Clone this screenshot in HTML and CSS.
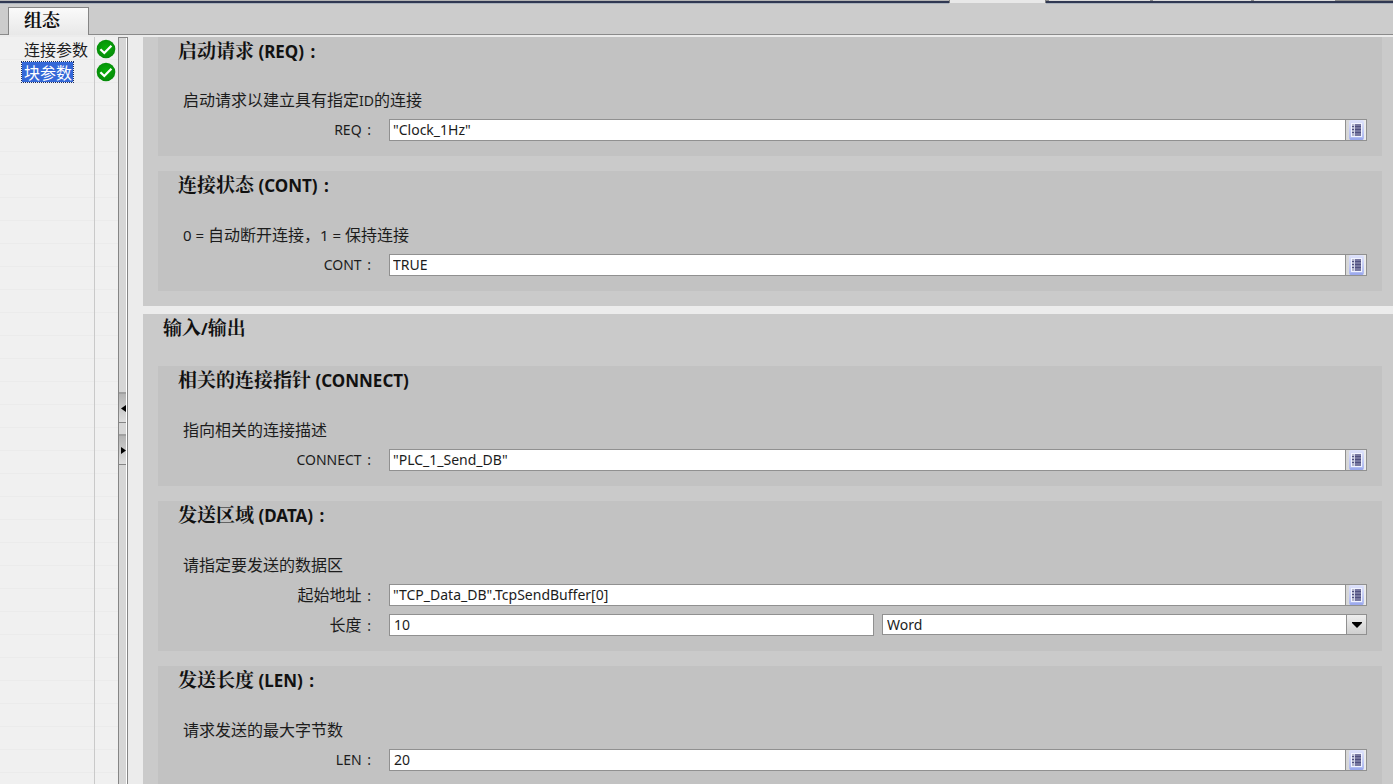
FILE: index.html
```
<!DOCTYPE html>
<html lang="zh-CN">
<head>
<meta charset="utf-8">
<title>组态</title>
<link rel="stylesheet" href="styles.css">
</head>
<body>
<svg class="defs" aria-hidden="true">
  <defs>
    <radialGradient id="green" cx="50%" cy="45%" r="55%"><stop offset="0" stop-color="#08b008"/><stop offset="1" stop-color="#068a0a"/></radialGradient>
    <linearGradient id="halo" x1="0" y1="0" x2="0" y2="1"><stop offset="0" stop-color="#dfe3fb"/><stop offset="1" stop-color="#a9b5f0"/></linearGradient>
    <symbol id="ok" viewBox="0 0 20 20">
      <circle cx="10" cy="10" r="9.3" fill="url(#green)"/>
      <path d="M4.4 10.2 8.3 14 15.4 6.8" fill="none" stroke="#fff" stroke-width="2.3"/>
    </symbol>
    <symbol id="list" viewBox="0 0 20 20">
      <rect x="3" y="0" width="15" height="20" rx="2" fill="url(#halo)"/>
      <rect x="5" y="3" width="11" height="14" fill="#f2f4ff"/>
      <path d="M6 4h2v12H6z" fill="#b4b6cc"/>
      <path d="M8 4h7v12H8z" fill="#77779f"/>
      <path d="M6 6.5h9M6 9.5h9M6 12.5h9" stroke="#505080" stroke-width="1"/>
      <path d="M8.5 4v12" stroke="#d4d6ea" stroke-width="1"/>
      <path d="M4 19h13" stroke="#8d9cea" stroke-width="1"/>
    </symbol>
  </defs>
</svg>
<div class="app">
  <div class="strip">
    <div class="strip-dark"></div>
    <div class="strip-active"></div>
    <div class="strip-rest"><i></i><i></i><i></i></div>
  </div>
  <header class="tabs"><button class="tab" type="button">组态</button></header>
  <div class="work">
    <nav class="side">
      <ul class="nav">
        <li class="nav-row"><a class="nav-link" href="#conn">连接参数</a><svg class="ok"><use href="#ok"/></svg></li>
        <li class="nav-row"><a class="nav-link current" href="#block">块参数</a><svg class="ok"><use href="#ok"/></svg></li>
      </ul>
    </nav>
    <div class="splitter">
      <button class="grip" type="button" aria-label="向左折叠"><svg viewBox="0 0 5 7"><path d="M5 0v7L0 3.5z"/></svg></button>
      <button class="grip" type="button" aria-label="向右折叠"><svg viewBox="0 0 5 7"><path d="M0 0v7l5-3.5z"/></svg></button>
    </div>
    <main class="main" id="block">
      <section class="group">
        <div class="card">
          <h3 class="title"><span class="han">启动请求</span> (REQ) <span class="colon">:</span></h3>
          <p class="desc"><span class="han">启动请求以建立具有指定</span>ID<span class="han">的连接</span></p>
          <div class="row">
            <label class="label" for="req">REQ <span class="colon">:</span></label>
            <div class="field"><input class="text" id="req" value="&quot;Clock_1Hz&quot;"><button class="pick" type="button" aria-label="选择"><svg><use href="#list"/></svg></button></div>
          </div>
        </div>
        <div class="card">
          <h3 class="title"><span class="han">连接状态</span> (CONT) <span class="colon">:</span></h3>
          <p class="desc formula">0 = <span class="han">自动断开连接，</span>1 = <span class="han">保持连接</span></p>
          <div class="row">
            <label class="label" for="cont">CONT <span class="colon">:</span></label>
            <div class="field"><input class="text" id="cont" value="TRUE"><button class="pick" type="button" aria-label="选择"><svg><use href="#list"/></svg></button></div>
          </div>
        </div>
      </section>
      <section class="group">
        <h2 class="group-title"><span class="han">输入</span>/<span class="han">输出</span></h2>
        <div class="card">
          <h3 class="title"><span class="han">相关的连接指针</span> (CONNECT)</h3>
          <p class="desc"><span class="han">指向相关的连接描述</span></p>
          <div class="row">
            <label class="label" for="connect">CONNECT <span class="colon">:</span></label>
            <div class="field"><input class="text" id="connect" value="&quot;PLC_1_Send_DB&quot;"><button class="pick" type="button" aria-label="选择"><svg><use href="#list"/></svg></button></div>
          </div>
        </div>
        <div class="card">
          <h3 class="title"><span class="han">发送区域</span> (DATA) <span class="colon">:</span></h3>
          <p class="desc"><span class="han">请指定要发送的数据区</span></p>
          <div class="row">
            <label class="label" for="start"><span class="han">起始地址</span> <span class="colon">:</span></label>
            <div class="field"><input class="text" id="start" value="&quot;TCP_Data_DB&quot;.TcpSendBuffer[0]"><button class="pick" type="button" aria-label="选择"><svg><use href="#list"/></svg></button></div>
          </div>
          <div class="row">
            <label class="label" for="length"><span class="han">长度</span> <span class="colon">:</span></label>
            <div class="pair">
              <div class="field"><input class="text number" id="length" value="10"></div>
              <div class="field drop"><select class="select" aria-label="数据类型"><option>Word</option></select><span class="arrow"><svg viewBox="0 0 10 6"><path d="M0 0h10v1L5 6 0 1z"/></svg></span></div>
            </div>
          </div>
        </div>
        <div class="card">
          <h3 class="title"><span class="han">发送长度</span> (LEN) <span class="colon">:</span></h3>
          <p class="desc"><span class="han">请求发送的最大字节数</span></p>
          <div class="row">
            <label class="label" for="len">LEN <span class="colon">:</span></label>
            <div class="field"><input class="text number" id="len" value="20"><button class="pick" type="button" aria-label="选择"><svg><use href="#list"/></svg></button></div>
          </div>
        </div>
      </section>
    </main>
  </div>
</div>
</body>
</html>
```
FILE: styles.css
```
* { box-sizing: border-box; }
body {
  margin: 0;
  font: 14px/20px "Noto Sans", "Noto Sans CJK SC", sans-serif;
  color: #1c1c1c;
  background: #e8e8e8;
}
button, input, select { font: inherit; color: inherit; margin: 0; padding: 0; border: 0; border-radius: 0; }
h2, h3, p, ul { margin: 0; padding: 0; }
.defs { position: absolute; width: 0; height: 0; }
.app { height: 100vh; display: flex; flex-direction: column; overflow: hidden; }

.strip { display: flex; height: 4px; flex: none; background: #cccccc; }
.strip-dark { width: 68.1%; border-top: 1px solid #b4b4b4; border-bottom: 1px solid #aab2bc; background: #303852; }
.strip-active { width: 7%; background: #e8e8e8; height: 3px; border-left: 1px solid #808080; border-right: 1px solid #808080; }
.strip-rest { flex: 1; display: flex; gap: 3px; padding-left: 3px; border-bottom: 1px solid #aab2bc; background: linear-gradient(#8c8c8c 1px, #303852 1px); }
.strip-rest i { flex: 101; height: 1px; background: #dcdcdc; }
.strip-rest i:nth-child(2) { flex: 97; }
.strip-rest i:last-child { flex: 81; margin-right: 58px; }

.tabs { flex: none; height: 31px; padding: 3px 8px 0; background: #cccccc; border-bottom: 1px solid #8a8a8a; }
.tab {
  display: block; width: 81px; height: 28px; padding: 0 13px 6px 0;
  border: 1px solid #858585; border-bottom: 0;
  background: linear-gradient(#fafafa, #e8e8e8);
  font-size: 18px; line-height: 20px; font-weight: 700; color: #111;
  font-family: "Noto Serif CJK SC", "Noto Sans CJK SC", serif;
}

.work { flex: 1; min-height: 0; display: flex; padding-top: 2px; background: #ececec; }
.side {
  flex: none; width: 118px;
  background: linear-gradient(90deg, transparent 94px, #c9c9c9 94px, #c9c9c9 95px, transparent 95px),
    repeating-linear-gradient(#f0f0f0 0 22px, #ebebeb 22px 23px);
}
.nav { list-style: none; }
.nav-row { display: flex; align-items: center; height: 23px; padding: 0 2px 0 22px; }
.nav-link { padding: 0 1px 0 2px; font-size: 16px; line-height: 20px; color: #1c1c1c; text-decoration: none; font-family: "Noto Sans CJK SC", sans-serif; white-space: nowrap; }
.nav-link.current { padding: 0 1px 0 2px; background: #3468d8; color: #fff; outline: 1px dotted #1a2c60; }
.ok { width: 20px; height: 20px; margin-left: auto; flex: none; }

.splitter {
  flex: none; width: 10px; display: flex; flex-direction: column; gap: 11px; padding-top: 354px; margin-right: 15px;
  border-left: 1px solid #858585; border-right: 1px solid #858585; border-top: 1px solid #858585;
  background: linear-gradient(90deg, #d6d6d6 7px, #fff 7px);
}
.grip { width: 7px; height: 31px; display: grid; place-items: center end; border-top: 2px solid #a0a0a0; border-bottom: 1px solid #858585; background: linear-gradient(#b4b4b4, #dedede); }
.grip svg { display: block; width: 5px; height: 7px; }

.main { flex: 1; min-width: 0; overflow: hidden; display: flex; flex-direction: column; gap: 8px; }
.group { flex: none; display: flex; flex-direction: column; gap: 15px; padding: 0 11px 15px 15px; background: #cacaca; }
.group-title { height: 37px; padding-left: 5px; line-height: 30px; font-size: 16px; color: #111; }
.card { display: flex; flex-direction: column; padding: 0 15px 15px 20px; background: #c2c2c2; }
.title { height: 31px; font-size: 17px; line-height: 30px; font-weight: 700; color: #111; }
.group:first-child .card:first-child .title { height: 30px; }
.title .han, .group-title .han { font-size: 19px; line-height: 20px; font-family: "Noto Serif CJK SC", "Noto Sans CJK SC", serif; }
.desc { padding: 22px 0 0 5px; height: 52px; line-height: 22px; }
.formula { font-size: 15px; }
.han { font-size: 16px; font-family: "Noto Sans CJK SC", sans-serif; line-height: 20px; }
.colon { margin-left: 2px; }
.row { display: flex; align-items: center; height: 22px; }
.row + .row { margin-top: 8px; }
.label { flex: none; width: 211px; padding-right: 18px; text-align: right; line-height: 22px; white-space: nowrap; }
.field { flex: 1; min-width: 0; display: flex; height: 22px; border: 1px solid #909090; background: #fff; }
.text { flex: 1; min-width: 0; padding: 0 0 1px 3px; background: #fff; outline: 0; }
.number { padding-left: 4px; }
.pick { flex: none; width: 21px; border-left: 1px solid #909090; background: linear-gradient(90deg, #d6d6d6, #ececec); }
.pick svg { display: block; width: 20px; height: 20px; }
.pair { flex: 1; min-width: 0; display: grid; grid-template-columns: 1fr 1fr; gap: 8px; }
.drop { position: relative; height: 21px; }
.select { flex: 1; padding-left: 4px; appearance: none; background: #fff; outline: 0; }
.arrow { position: absolute; top: 0; right: 0; bottom: 0; width: 20px; display: grid; place-items: center; border-left: 1px solid #909090; background: linear-gradient(#eeeeee, #cfcfcf); pointer-events: none; }
.arrow svg { display: block; width: 10px; height: 6px; }
```
